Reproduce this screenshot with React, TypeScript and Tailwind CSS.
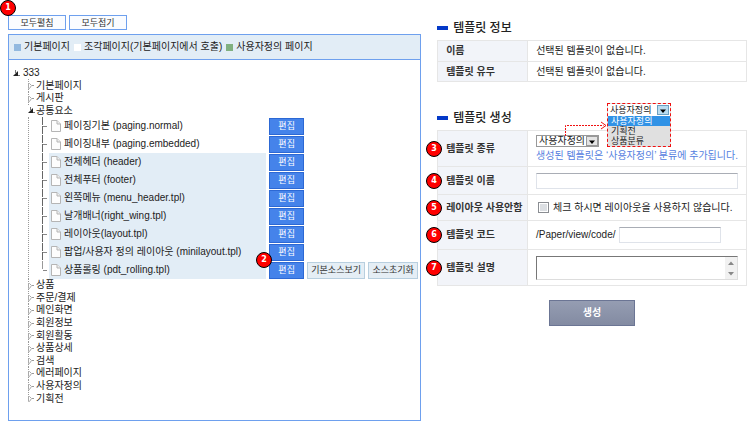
import React from 'react';
import clsx from 'clsx';

const files = [
  { name: '페이징기본 (paging.normal)', custom: false },
  { name: '페이징내부 (paging.embedded)', custom: false },
  { name: '전체헤더 (header)', custom: true },
  { name: '전체푸터 (footer)', custom: true },
  { name: '왼쪽메뉴 (menu_header.tpl)', custom: true },
  { name: '날개배너(right_wing.tpl)', custom: true },
  { name: '레이아웃(layout.tpl)', custom: true },
  { name: '팝업/사용자 정의 레이아웃 (minilayout.tpl)', custom: true },
  { name: '상품롤링 (pdt_rolling.tpl)', custom: true },
];

const closedFolders = [
  '상품',
  '주문/결제',
  '메인화면',
  '회원정보',
  '회원활동',
  '상품상세',
  '검색',
  '에러페이지',
  '사용자정의',
  '기획전',
];

const Badge: React.FC<{ n: number; className: string }> = ({ n, className }) => (
  <span
    className={clsx(
      'absolute z-10 flex h-4 w-4 items-center justify-center rounded-full border border-black bg-[#fe0000] font-["DejaVu_Sans",sans-serif] text-[8px] leading-none font-bold text-white',
      className
    )}
  >
    {n}
  </span>
);

const OpenArrow: React.FC = () => (
  <svg width="8" height="13" viewBox="0 0 8 13" className="shrink-0" aria-hidden="true">
    <path d="M6 4v5H1z" fill="#222" />
    <path d="M3.5 3v3M6 8.5h2" stroke="#777" fill="none" />
  </svg>
);

const ClosedArrow: React.FC<{ last?: boolean }> = ({ last }) => (
  <svg width="8" height="13" viewBox="0 0 8 13" className="shrink-0" aria-hidden="true">
    <path d={last ? 'M1.5 0v5' : 'M1.5 0v13'} stroke="#999" strokeDasharray="1 1" fill="none" />
    <path d="M1.5 4.5h1l2 2-2 3h-1z" stroke="#aaa" fill="#fff" />
    <path d="M5 6.5h3" stroke="#999" strokeDasharray="2 1" />
  </svg>
);

const FileGuide: React.FC<{ last: boolean }> = ({ last }) => (
  <svg width="6" height="18" viewBox="0 0 6 18" className="shrink-0" aria-hidden="true">
    <path d={last ? 'M.5 0v9' : 'M.5 0v18'} stroke={last ? '#999' : '#666'} strokeDasharray="8 1" />
    <path d="M1 9.5h4" stroke="#888" />
  </svg>
);

const FileIcon: React.FC = () => (
  <svg width="10" height="12" viewBox="0 0 10 12" className="shrink-0" aria-hidden="true">
    <path d="M.5.5h5.5l3.5 3.5v7.500h-9z" fill="#fdfdfd" stroke="#b5b5b5" />
    <path d="M6 .5v3.500h3.500" fill="#eee" stroke="#b5b5b5" />
  </svg>
);

const DropButton: React.FC<{ blue?: boolean }> = ({ blue }) => (
  <svg
    width="12"
    height="10"
    viewBox="0 0 12 10"
    className="pointer-events-none absolute top-px right-px"
    aria-hidden="true"
  >
    <rect x=".5" y=".5" width="11" height="9" fill={blue ? '#b9dcf0' : '#e4e4e4'} stroke={blue ? '#6a9fc0' : '#999'} />
    <path d="M3 4.500h6l-3 3.500z" fill="#000" />
  </svg>
);

const Heading: React.FC<{ children: React.ReactNode }> = ({ children }) => (
  <h2 className="mb-1 flex h-4 items-center gap-[5px] text-xs leading-4 font-medium text-[#222]">
    <span className="h-1 w-[11px] bg-[#0439c8]" />
    {children}
  </h2>
);

const Label: React.FC<{ htmlFor?: string; badge?: number; children: React.ReactNode }> = ({
  htmlFor,
  badge,
  children,
}) => (
  <th scope="row" className="relative w-[90px] border border-[#e6e6e6] bg-[#f2f4f9] pl-2 text-left font-bold whitespace-nowrap text-[#333]">
    {badge && <Badge n={badge} className="top-1/2 -left-3 -translate-y-1/2" />}
    {htmlFor ? <label htmlFor={htmlFor}>{children}</label> : children}
  </th>
);

const cell = 'border border-[#e6e6e6] px-2';
const input = 'h-4 border border-[#dfe3ea] border-t-[#a9adb5] bg-white px-1 outline-none';
const grayButton = 'h-[17px] border border-[#b8cfdf] bg-[#e5eef5] text-[9px] whitespace-nowrap text-[#333]';

const TemplateTree: React.FC = () => (
  <div className="relative pt-[15px]">
    <Badge n={1} className="top-0 -left-2" />
    <div className="mb-1 flex gap-[3px]">
      {['모두펼침', '모두접기'].map((label) => (
        <button
          key={label}
          type="button"
          className="flex h-[15px] w-[58px] items-center justify-center border border-[#6ea0ee] bg-[#fafcff] text-[9px] text-[#333]"
        >
          {label}
        </button>
      ))}
    </div>

    <div className="border border-[#6ea0ee] pb-[15px]">
      <div className="flex h-[25px] items-center border-b border-[#6ea0ee] bg-[#e2edf6] pl-[5px] whitespace-nowrap text-[#222]">
        <span className="mr-[3px] h-[7px] w-[7px] bg-[#93b9df]" />
        기본페이지
        <span className="mr-[3px] ml-1 h-[7px] w-[7px] bg-white" />
        조각페이지(기본페이지에서 호출)
        <span className="mr-[3px] ml-1 h-[7px] w-[7px] bg-[#80b080]" />
        사용자정의 페이지
      </div>

      <div className="pt-[7px] pl-[3px] text-[#222]">
        <div className="grid h-[50px] auto-rows-fr">
          <div className="flex items-center gap-[3px]">
            <OpenArrow />
            333
          </div>
          <div className="ml-[15px] flex items-center gap-px">
            <ClosedArrow />
            기본페이지
          </div>
          <div className="ml-[15px] flex items-center gap-px">
            <ClosedArrow />
            게시판
          </div>
          <div className="ml-[15px] flex items-center gap-px">
            <OpenArrow />
            공통요소
          </div>
        </div>

        <ul className="ml-4 border-l border-dotted border-[#999] pl-[13px]">
          {files.map((file, i) => (
            <li key={file.name} className="flex h-[18px] items-center">
              <FileGuide last={i === files.length - 1} />
              <span
                className={clsx(
                  'ml-px flex h-full flex-1 items-center gap-[3px] pl-[2px] whitespace-nowrap',
                  file.custom && 'bg-[#e2edf6]'
                )}
              >
                <FileIcon />
                {file.name}
              </span>
              <span className="relative ml-[3px] flex w-[151px] gap-[3px]">
                {i === files.length - 1 && <Badge n={2} className="-top-[10px] -left-[13px]" />}
                <button type="button" className="h-[17px] w-[35px] border border-[#2c68d4] bg-[#4583ea] text-[9px] text-white">
                  편집
                </button>
                {i === files.length - 1 && (
                  <>
                    <button type="button" className={clsx(grayButton, 'w-[58px]')}>
                      기본소스보기
                    </button>
                    <button type="button" className={clsx(grayButton, 'w-[50px]')}>
                      소스초기화
                    </button>
                  </>
                )}
              </span>
            </li>
          ))}
        </ul>

        <ul className="ml-[15px] grid h-[126px] auto-rows-fr">
          {closedFolders.map((name, i) => (
            <li key={name} className="flex items-center gap-px">
              <ClosedArrow last={i === closedFolders.length - 1} />
              {name}
            </li>
          ))}
        </ul>
      </div>
    </div>
  </div>
);

const TemplateForm: React.FC = () => (
  <div className="pt-5">
    <Heading>템플릿 정보</Heading>
    <table className="mb-7 w-full border-collapse">
      <tbody>
        <tr className="h-[21px]">
          <Label>이름</Label>
          <td className={cell}>선택된 템플릿이 없습니다.</td>
        </tr>
        <tr className="h-[20px]">
          <Label>템플릿 유무</Label>
          <td className={cell}>선택된 템플릿이 없습니다.</td>
        </tr>
      </tbody>
    </table>

    <Heading>템플릿 생성</Heading>
    <table className="w-full border-collapse">
      <tbody>
        <tr className="h-9">
          <Label htmlFor="kind" badge={3}>템플릿 종류</Label>
          <td className={cell}>
            <div className="relative w-[63px]">
              <select
                id="kind"
                className="block h-3 w-full appearance-none border border-[#999] bg-white pl-[2px] leading-[10px] outline-none"
              >
                <option>사용자정의</option>
                <option>기획전</option>
                <option>상품분류</option>
              </select>
              <DropButton />

              <svg width="46" height="20" viewBox="0 0 46 20" className="absolute -top-4 left-[28px]" aria-hidden="true">
                <path d="M1.500 17V6.500h38" fill="none" stroke="#f01010" strokeDasharray="2 1" />
                <path d="M37 3l5 3.500-5 3.500" fill="none" stroke="#f01010" />
              </svg>
              <div className="absolute -top-8 left-[71px] w-16 border border-dashed border-[#f01010] bg-[#e0e0e0] text-[9px] leading-[10px] whitespace-nowrap">
                <div className="relative h-3 bg-white pl-[2px] leading-3">
                  사용자정의
                  <DropButton blue />
                </div>
                <ul>
                  <li className="bg-[#3092e6] pl-[3px] text-white">사용자정의</li>
                  <li className="pl-[3px]">기획전</li>
                  <li className="pl-[3px]">상품분류</li>
                </ul>
              </div>
            </div>
            <p className="mt-[3px] leading-3 whitespace-nowrap text-[#5580e0]">
              생성된 템플릿은 ‘사용자정의’ 분류에 추가됩니다.
            </p>
          </td>
        </tr>
        <tr className="h-7">
          <Label htmlFor="name" badge={4}>템플릿 이름</Label>
          <td className={cell}>
            <input id="name" type="text" className={clsx(input, 'block w-full')} />
          </td>
        </tr>
        <tr className="h-[26px]">
          <Label badge={5}>레이아웃 사용안함</Label>
          <td className={cell}>
            <label className="flex items-center gap-1 pl-[2px]">
              <input type="checkbox" className="h-[11px] w-[11px] appearance-none border border-[#8a8d92] bg-[#dcdfe3] inset-ring inset-ring-white" />
              체크 하시면 레이아웃을 사용하지 않습니다.
            </label>
          </td>
        </tr>
        <tr className="h-[29px]">
          <Label htmlFor="code" badge={6}>템플릿 코드</Label>
          <td className={cell}>
            <div className="flex items-center gap-[3px]">
              /Paper/view/code/
              <input id="code" type="text" className={clsx(input, 'w-[102px]')} />
            </div>
          </td>
        </tr>
        <tr className="h-9">
          <Label htmlFor="desc" badge={7}>템플릿 설명</Label>
          <td className={cell}>
            <div className="relative">
              <textarea
                id="desc"
                className="block h-6 w-full resize-none overflow-hidden border border-[#ddd] border-t-[#777] border-l-[#777] bg-white px-1 outline-none"
              />
              <svg width="12" height="22" viewBox="0 0 12 22" className="pointer-events-none absolute top-px right-px" aria-hidden="true">
                <path d="M0 0h12v22H0z" fill="#f1f1f1" />
                <path d="M3 8h6L6 4.500zM3 15h6l-3 3.500z" fill="#888" />
              </svg>
            </div>
          </td>
        </tr>
      </tbody>
    </table>

    <div className="mt-[14px] flex justify-center">
      <button
        type="button"
        className="h-[26px] w-[86px] border border-[#6b7594] bg-linear-to-b from-[#959db2] to-[#838ba2] text-[10px] font-bold text-white"
      >
        생성
      </button>
    </div>
  </div>
);

export default function App() {
  return (
    <main className='grid grid-cols-[4fr_3fr] gap-4 bg-white pr-[3px] pl-2 font-["Liberation_Sans","Noto_Sans_CJK_KR",sans-serif] text-[10px] leading-3 text-[#222]'>
      <TemplateTree />
      <TemplateForm />
    </main>
  );
}
